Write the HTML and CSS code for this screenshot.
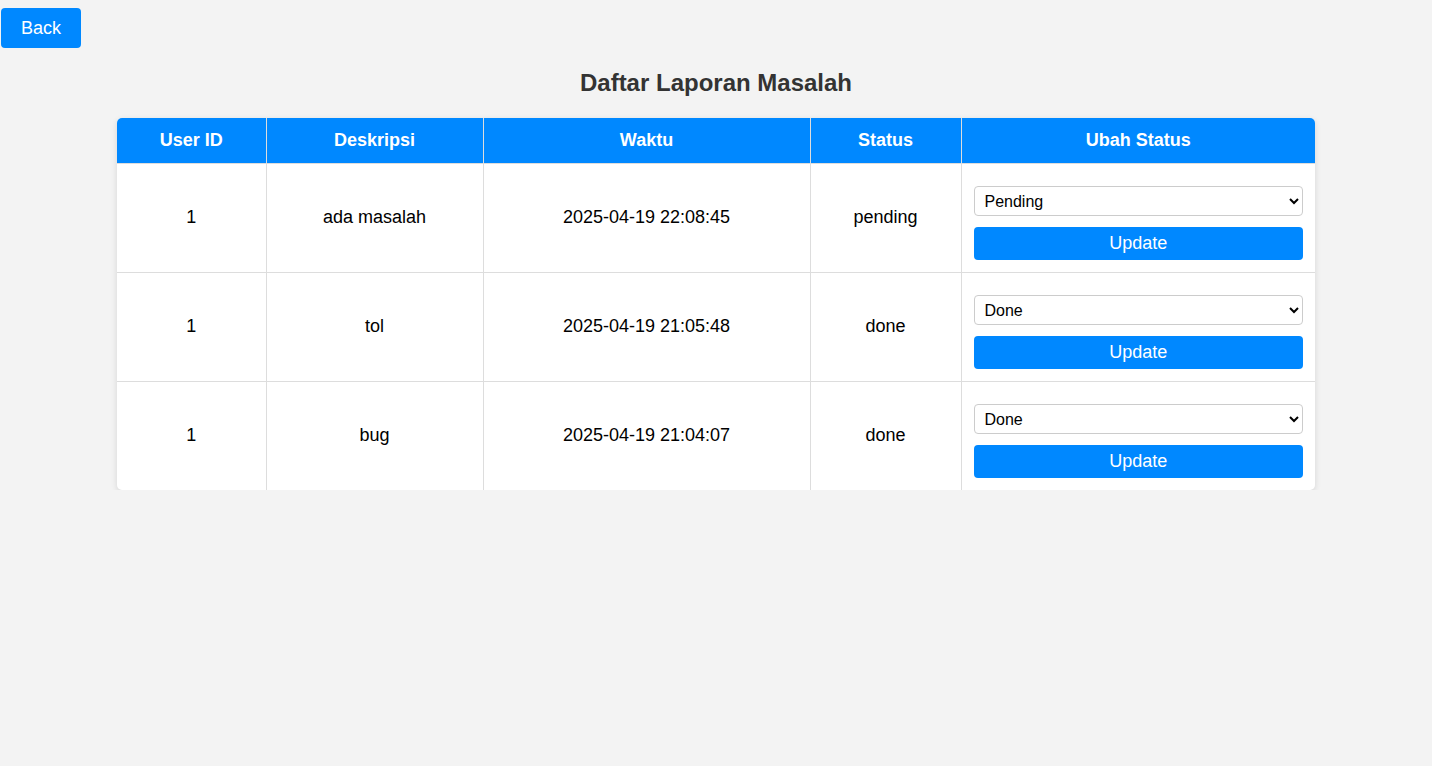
FILE: index.html
```html
<!DOCTYPE html>
<html lang="id">
<head>
<meta charset="utf-8">
<title>Daftar Laporan Masalah</title>
<link rel="stylesheet" href="styles.css">
</head>
<body>
<div class="topbar"><button class="back-btn">Back</button></div>
<h2 class="title">Daftar Laporan Masalah</h2>
<div class="table-wrap">
<table class="report-table">
<thead>
<tr>
<th class="c-user">User ID</th>
<th class="c-desc">Deskripsi</th>
<th class="c-time">Waktu</th>
<th class="c-status">Status</th>
<th class="c-action">Ubah Status</th>
</tr>
</thead>
<tbody>
<tr>
<td>1</td>
<td>ada masalah</td>
<td>2025-04-19 22:08:45</td>
<td>pending</td>
<td class="action-cell">
<form class="status-form">
<select class="status-select"><option selected>Pending</option><option>Done</option></select>
<button type="button" class="update-btn">Update</button>
</form>
</td>
</tr>
<tr>
<td>1</td>
<td>tol</td>
<td>2025-04-19 21:05:48</td>
<td>done</td>
<td class="action-cell">
<form class="status-form">
<select class="status-select"><option>Pending</option><option selected>Done</option></select>
<button type="button" class="update-btn">Update</button>
</form>
</td>
</tr>
<tr>
<td>1</td>
<td>bug</td>
<td>2025-04-19 21:04:07</td>
<td>done</td>
<td class="action-cell">
<form class="status-form">
<select class="status-select"><option>Pending</option><option selected>Done</option></select>
<button type="button" class="update-btn">Update</button>
</form>
</td>
</tr>
</tbody>
</table>
</div>
</body>
</html>
```
FILE: styles.css
```css
html, body {
  margin: 0;
  padding: 0;
  background: #f3f3f3;
  font-family: "Liberation Sans", Arial, sans-serif;
  color: #000;
}

.topbar {
  padding: 8px 0 0 1px;
  height: 40px;
}

.back-btn {
  display: block;
  width: 80px;
  height: 40px;
  padding: 0;
  border: none;
  border-radius: 4px;
  background: #0088ff;
  color: #fff;
  font-family: "Liberation Sans", Arial, sans-serif;
  font-size: 18px;
  cursor: pointer;
}

.title {
  margin: 21px 0 21px;
  height: 28px;
  line-height: 28px;
  text-align: center;
  font-size: 24px;
  font-weight: bold;
  color: #333;
}

.table-wrap {
  width: 1198px;
  margin: 0 auto;
  background: #fff;
  border-radius: 5px;
  overflow: hidden;
  box-shadow: 0 2px 6px rgba(0, 0, 0, 0.12);
}

.report-table {
  width: 100%;
  border-collapse: collapse;
  table-layout: fixed;
  font-size: 18px;
}

.report-table th,
.report-table td {
  border: 1px solid #ddd;
  text-align: center;
  vertical-align: middle;
}

.report-table tr:first-child th { border-top: none; }
.report-table tr:last-child td { border-bottom: none; }
.report-table th:first-child, .report-table td:first-child { border-left: none; }
.report-table th:last-child, .report-table td:last-child { border-right: none; }

.report-table th {
  background: #0088ff;
  color: #fff;
  font-weight: bold;
  height: 45px;
  padding: 0 12px;
  box-sizing: border-box;
  line-height: 21px;
}

.c-user { width: 149px; }
.c-desc { width: 217px; }
.c-time { width: 327px; }
.c-status { width: 151px; }

.report-table td {
  height: 109px;
  padding: 12px;
  box-sizing: border-box;
  line-height: 21px;
}

.status-form {
  margin: 0;
  padding-top: 10px;
  display: flex;
  flex-direction: column;
  gap: 11px;
}

.status-select {
  width: 100%;
  height: 30px;
  border: 1px solid #ccc;
  border-radius: 4px;
  background: #fff;
  font-family: "Liberation Sans", Arial, sans-serif;
  font-size: 16px;
  color: #000;
  padding: 1px 6px 0;
}

.update-btn {
  width: 100%;
  height: 33px;
  border: none;
  border-radius: 4px;
  background: #0088ff;
  color: #fff;
  font-family: "Liberation Sans", Arial, sans-serif;
  font-size: 18px;
  padding: 0;
  cursor: pointer;
}
```
